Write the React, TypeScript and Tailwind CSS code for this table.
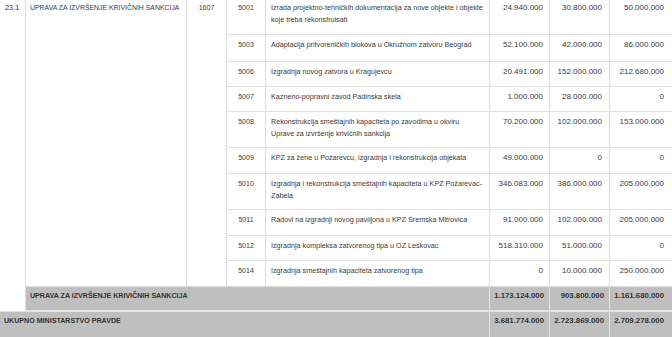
const rows = [
  { code: "5001", label: ["Izrada projektno-tehničkih dokumentacija za nove objekte i objekte", "koje treba rekonstruisati"], v: ["24.940.000", "30.800.000", "50.000.000"], first: true },
  { code: "5003", label: ["Adaptacija pritvoreničkih blokova u Okružnom zatvoru Beograd"], v: ["52.100.000", "42.000.000", "86.000.000"] },
  { code: "5006", label: ["Izgradnja novog zatvora u Kragujevcu"], v: ["20.491.000", "152.000.000", "212.680.000"] },
  { code: "5007", label: ["Kazneno-popravni zavod Padinska skela"], v: ["1.000.000", "28.000.000", "0"] },
  { code: "5008", label: ["Rekonstrukcija smeštajnih kapaciteta po zavodima u okviru", "Uprave za izvršenje krivičnih sankcija"], v: ["70.200.000", "102.000.000", "153.000.000"] },
  { code: "5009", label: ["KPZ za žene u Požarevcu, izgradnja i rekonstrukcija objekata"], v: ["49.000.000", "0", "0"] },
  { code: "5010", label: ["Izgradnja i rekonstrukcija smeštajnih kapaciteta u KPZ Požarevac-", "Zabela"], v: ["346.083.000", "386.000.000", "205.000.000"] },
  { code: "5011", label: ["Radovi na izgradnji novog paviljona u KPZ Sremska Mitrovica"], v: ["91.000.000", "102.000.000", "205.000.000"] },
  { code: "5012", label: ["Izgradnja kompleksa zatvorenog tipa u OZ Leskovac"], v: ["518.310.000", "51.000.000", "0"] },
  { code: "5014", label: ["Izgradnja smeštajnih kapaciteta zatvorenog tipa"], v: ["0", "10.000.000", "250.000.000"] },
];

const cell = "border-r border-b border-[#dedede] leading-[12px]";
const gray = "bg-[#bfbfbf] border-r border-[#e4e4e4] leading-[12px] font-bold text-[#333] pt-[3px]";
const numPad = ["pr-[6px]", "pr-[7px]", "pr-[9px]"];

export default function App() {
  return (
    <div
      className="w-[672px] h-[337px] overflow-hidden bg-white text-[#3a3a3a] grid grid-cols-[26px_161px_40px_39px_224px_60px_60px_64px] grid-rows-[35px_27px_25px_25px_36px_26px_36px_26px_25px_26px_25px_25px]"
      style={{ fontFamily: '"Liberation Sans", Arial, sans-serif' }}
    >
      <div className={`${cell} row-span-11 pt-[2px] pl-[5px] text-[7.4px]`}>23.1</div>
      <div className={`${cell} row-span-10 pt-[2px] pl-[4px] text-[6.9px] whitespace-nowrap`}>UPRAVA ZA IZVRŠENJE KRIVIČNIH SANKCIJA</div>
      <div className={`${cell} row-span-10 pt-[2px] text-center text-[7px]`}>1607</div>

      {rows.map((r) => {
        const pt = r.first ? "pt-[2px]" : "pt-[4px]";
        return [
          <div key={r.code + "c"} className={`${cell} ${pt} text-center text-[7px]`}>{r.code}</div>,
          <div key={r.code + "l"} className={`${cell} ${pt} pl-[5px] text-[7.2px] whitespace-nowrap`}>
            {r.label.map((l, j) => (
              <div key={j}>{l}</div>
            ))}
          </div>,
          ...r.v.map((v, j) => (
            <div key={r.code + j} className={`${cell} ${pt} text-right text-[8px] ${numPad[j]}`}>
              {v}
            </div>
          )),
        ];
      })}

      <div className={`${gray} col-span-4 border-b-2 border-b-[#e4e4e4] pl-[4px] text-[7.1px] whitespace-nowrap`}>UPRAVA ZA IZVRŠENJE KRIVIČNIH SANKCIJA</div>
      <div className={`${gray} border-b-2 border-b-[#e4e4e4] text-right text-[7.8px] pr-[5px]`}>1.173.124.000</div>
      <div className={`${gray} border-b-2 border-b-[#e4e4e4] text-right text-[7.8px] pr-[5px]`}>903.800.000</div>
      <div className={`${gray} border-b-2 border-b-[#e4e4e4] text-right text-[7.8px] pr-[9px]`}>1.161.680.000</div>

      <div className={`${gray} col-span-5 pl-[4px] text-[7.1px] whitespace-nowrap`}>UKUPNO MINISTARSTVO PRAVDE</div>
      <div className={`${gray} text-right text-[7.8px] pr-[5px]`}>3.681.774.000</div>
      <div className={`${gray} text-right text-[7.8px] pr-[5px]`}>2.723.869.000</div>
      <div className={`${gray} text-right text-[7.8px] pr-[9px]`}>2.709.278.000</div>
    </div>
  );
}
